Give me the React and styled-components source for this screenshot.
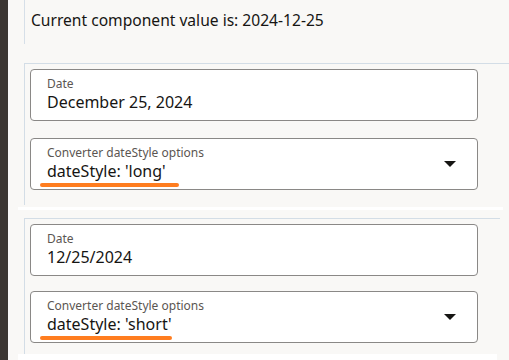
import React from 'react'
import styled, { createGlobalStyle } from 'styled-components'

const GlobalStyle = createGlobalStyle`
  html, body {
    margin: 0;
    padding: 0;
    background: #f9f8f6;
    font-family: "Noto Sans", "Open Sans", sans-serif;
    color: #161513;
    overflow: hidden;
  }
`

const Page = styled.div`
  display: flex;
  min-height: 360px;
`

const Sidebar = styled.div`
  width: 8px;
  flex: none;
  background: #3b3632;
`

const Main = styled.main`
  flex: 1;
  padding-left: 16px;
  display: flex;
  flex-direction: column;
`

const Result = styled.div`
  border-left: 1px solid #d6dfe8;
  height: 44px;
  padding: 10px 0 0 6px;
  box-sizing: border-box;
  font-size: 15.6px;
  line-height: 20px;
  color: #161513;
`

const Section = styled.section`
  margin-top: ${p => p.$top}px;
  margin-right: ${p => p.$edge || 0}px;
  border-top: 1px solid #d3dde6;
  border-left: 1px solid #d3dde6;
  padding: 5px ${p => p.$right}px ${p => p.$bottom}px 5px;
  display: flex;
  flex-direction: column;
  gap: ${p => p.$gap}px;
`

const Band = styled.div`
  margin-left: -6px;
  margin-right: ${p => p.$right}px;
  height: ${p => p.$h}px;
  margin-top: ${p => p.$top}px;
  background: #ffffff;
`

const Field = styled.div`
  position: relative;
  height: 52px;
  box-sizing: border-box;
  background: #ffffff;
  border: 1px solid #8a8886;
  border-radius: 4px;
  padding: 6px 40px 0 16px;
  display: flex;
  flex-direction: column;
`

const Label = styled.span`
  font-size: 12px;
  line-height: 16px;
  color: #5b5652;
`

const Value = styled.span`
  position: relative;
  align-self: flex-start;
  font-size: 16px;
  line-height: 21px;
  color: #161513;
`

const Mark = styled.span`
  position: absolute;
  left: -7px;
  bottom: -5px;
  width: ${p => p.$w}px;
  height: 4px;
  border-radius: 2px;
  background: #ff7d1f;
`

const Caret = styled.svg`
  position: absolute;
  right: 21px;
  top: 22px;
  width: 12px;
  height: 6px;
`

const DateField = ({ value }) => (
  <Field>
    <Label>Date</Label>
    <Value>{value}</Value>
  </Field>
)

const StyleSelect = ({ value, mark }) => (
  <Field>
    <Label>Converter dateStyle options</Label>
    <Value>
      {value}
      <Mark $w={mark} />
    </Value>
    <Caret viewBox="0 0 12 6">
      <path d="M0 0h12L6 6z" fill="#161513" />
    </Caret>
  </Field>
)

export default function App() {
  return (
    <Page>
      <GlobalStyle />
      <Sidebar />
      <Main>
        <Result>Current component value is: 2024-12-25</Result>
        <Section $top={19} $right={31} $bottom={15} $gap={17}>
          <DateField value="December 25, 2024" />
          <StyleSelect value="dateStyle: 'long'" mark={139} />
        </Section>
        <Band $top={2} $h={3} $right={6} />
        <Section $top={8} $edge={9} $right={22} $bottom={11} $gap={15}>
          <DateField value="12/25/2024" />
          <StyleSelect value="dateStyle: 'short'" mark={132} />
        </Section>
        <Band $top={0} $h={10} $right={12} />
      </Main>
    </Page>
  )
}
